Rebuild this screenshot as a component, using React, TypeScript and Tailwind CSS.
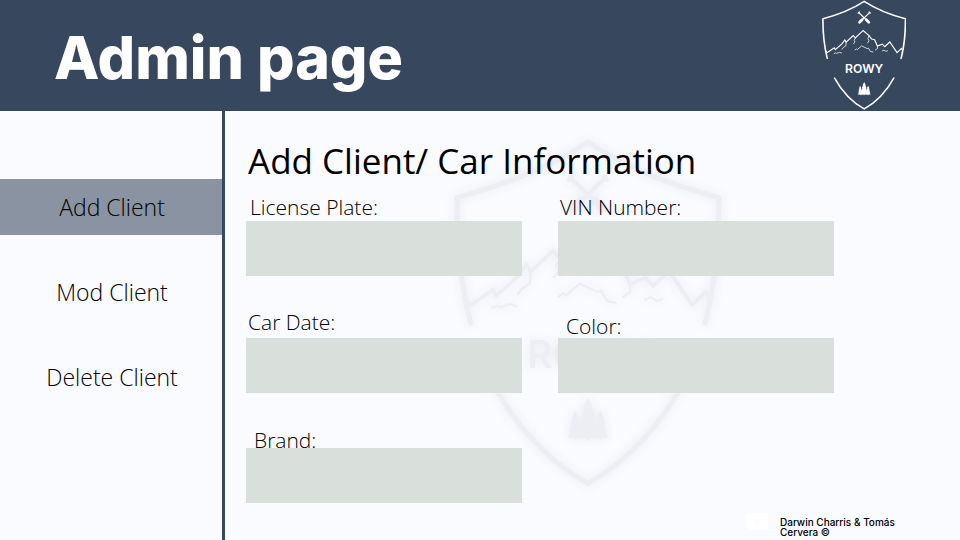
import { useState } from "react";

function Crest({ className }: { className: string }) {
  return (
    <svg viewBox="70 24 804 1048" className={className} fill="none" stroke="currentColor" aria-hidden="true">
      <g strokeWidth="15" strokeLinecap="round">
        <path d="M120 580 C92 470 78 340 79 203 C230 163 360 110 472 37 C584 110 712 163 865 203 C866 340 852 470 824 580" />
        <path d="M190 768 C260 895 360 1000 472 1061 C584 1000 684 895 754 768" />
      </g>
      <g strokeWidth="11" strokeLinejoin="miter">
        <path d="M106 508 L118 527 L187 480 L197 497 L262 440 L287 405 L300 425 L368 362 L388 386 L462 314 L518 363 L543 396 L571 402 L598 462 L645 445 L668 468 L716 424 L785 525 L827 485 L838 508" />
      </g>
      <g strokeWidth="7">
        <path d="M300 422 L298 460 L272 478 L260 496" />
        <path d="M388 386 L376 408 L384 424 L368 444" />
        <path d="M518 363 L508 392 L518 412 L502 436" />
        <path d="M598 460 L600 486 L576 502" />
        <path d="M382 502 L398 490 L406 497 L448 461 L500 487 L512 482 L530 514 L558 520" />
        <path d="M182 535 L202 528 L210 532 L238 523 L260 530" />
        <path d="M642 510 L660 502 L680 513 L698 506" />
      </g>
      <g strokeLinecap="round">
        <path d="M418 142 L520 240 M526 142 L424 240" strokeWidth="12" />
        <path d="M492 212 L516 236 M452 212 L428 236" strokeWidth="25" />
        <path d="M414 150 L426 138 M518 138 L530 150" strokeWidth="11" />
      </g>
      <text x="472" y="716" textAnchor="middle" stroke="none" fill="currentColor" className="font-[Inter,sans-serif] text-[116px] font-semibold">
        ROWY
      </text>
      <g fill="currentColor" stroke="none">
        <path d="M472 805 L488 838 L482 838 L496 866 L489 866 L503 896 L496 896 L508 924 L475 924 L475 932 L467 932 L467 924 L436 924 L448 896 L441 896 L455 866 L448 866 L462 838 L456 838 Z" />
        <path d="M434 842 L446 868 L441 868 L451 892 L446 892 L457 924 L437 924 L437 932 L431 932 L431 924 L411 924 L422 906 L415 906 L424 886 L418 886 L427 866 L422 866 Z" />
        <path d="M509 840 L521 866 L516 866 L526 886 L520 886 L530 906 L523 906 L534 924 L514 924 L514 932 L508 932 L508 924 L488 924 L498 892 L492 892 L502 866 L497 866 Z" />
      </g>
    </svg>
  );
}

const pages = ["Add Client", "Mod Client", "Delete Client"];

function Sidebar() {
  const [active, setActive] = useState("Add Client");
  return (
    <nav className="flex w-[225px] shrink-0 flex-col gap-[29px] border-r-3 border-[#37475e] pt-[68px]">
      {pages.map((page) => (
        <button
          key={page}
          type="button"
          onClick={() => setActive(page)}
          className={
            page === active
              ? "h-14 bg-[#8a93a2] pl-0.5 text-[23px] font-light text-black"
              : "h-14 pl-0.5 text-[23px] font-light text-black"
          }
        >
          {page}
        </button>
      ))}
    </nav>
  );
}

function Field({ id, label, labelClass }: { id: string; label: string; labelClass: string }) {
  return (
    <div className="flex flex-col">
      <label htmlFor={id} className={`${labelClass} text-[21px] leading-6 font-light text-black`}>
        {label}
      </label>
      <input id={id} name={id} type="text" className="h-[55px] w-full bg-[#d9dfdb] px-3 text-xl outline-none" />
    </div>
  );
}

export default function App() {
  return (
    <div className="flex min-h-screen flex-col bg-[#fafbfe] font-['Open_Sans','Noto_Sans',sans-serif]">
      <header className="flex items-center justify-between bg-[#37475e] pr-[54px] pb-px pl-[54px] text-white">
        <h1 className="pt-1 font-[Inter,sans-serif] text-[59px] leading-none font-extrabold">Admin page</h1>
        <Crest className="h-[110px]" />
      </header>

      <div className="flex flex-1">
        <Sidebar />

        <main className="relative flex flex-1 flex-col pt-7 pl-[21px]">
          <Crest className="absolute top-[27px] left-[229px] h-[349px] text-[#edeef3] drop-shadow-[0_0_5px_#e9eaf2]" />

          <form className="relative max-w-[588px]">
            <h2 className="pl-0.5 text-[35px] leading-[44px] text-black">Add Client/ Car Information</h2>
            <div className="mt-3 grid grid-cols-2 items-end gap-x-9">
              <Field id="license-plate" label="License Plate:" labelClass="pl-1 pb-0.5" />
              <Field id="vin-number" label="VIN Number:" labelClass="pl-0.5 pb-0.5" />
            </div>
            <div className="mt-[34px] grid grid-cols-2 items-end gap-x-9">
              <Field id="car-date" label="Car Date:" labelClass="pl-0.5 pb-1" />
              <Field id="color" label="Color:" labelClass="pl-2" />
            </div>
            <div className="mt-[35px] grid grid-cols-2 gap-x-9">
              <Field id="brand" label="Brand:" labelClass="-mb-1 pl-2" />
            </div>
          </form>

          <footer className="relative mt-auto flex gap-3 self-end pr-[60px] pb-[3px]">
            <svg viewBox="0 0 21 17" className="h-[17px] w-[21px]" aria-hidden="true">
              <rect width="21" height="17" rx="2" fill="#ffffff" />
              <path d="M8 5.5 L13.5 8.5 L8 11.5 Z" fill="#fafbfd" />
            </svg>
            <p className="w-[120px] pt-1 font-[Inter,sans-serif] text-[10px] leading-[10px] font-medium text-black">
              Darwin Charris &amp; Tomás Cervera ©
            </p>
          </footer>
        </main>
      </div>
    </div>
  );
}
